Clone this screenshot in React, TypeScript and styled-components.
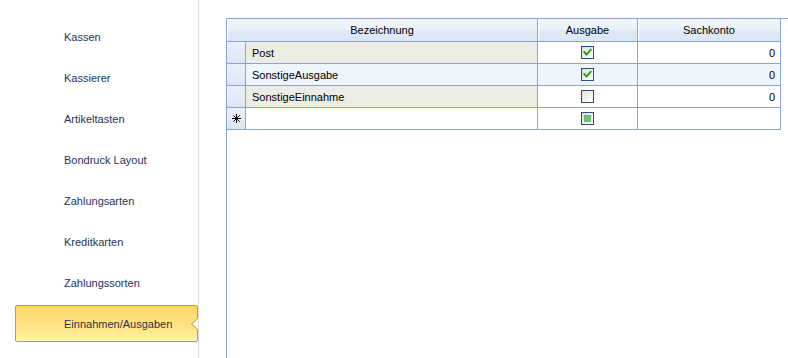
import React from "react";
import styled, { createGlobalStyle, css } from "styled-components";

const GRID_LINE = "#8aa2e2";

const GlobalStyle = createGlobalStyle`
  html, body { margin: 0; padding: 0; background: #fff; }
  body { font-family: "Liberation Sans", Arial, sans-serif; font-size: 11px; color: #000; }
  #root { width: 788px; height: 358px; overflow: hidden; }
`;

const Page = styled.div`
  display: flex;
  width: 788px;
  height: 358px;
  background: #fff;
  overflow: hidden;
`;

const Sidebar = styled.nav`
  flex: none;
  width: 199px;
  height: 100%;
  box-sizing: border-box;
  border-right: 1px solid #dddddd;
`;

const NavList = styled.ul`
  list-style: none;
  margin: 0;
  padding: 18px 0 0 15px;
  height: 100%;
  box-sizing: border-box;
  display: flex;
  flex-direction: column;
  gap: 4px;
  overflow: hidden;
`;

const NavItem = styled.li<{ $active?: boolean }>`
  position: relative;
  height: 37px;
  box-sizing: border-box;
  display: flex;
  align-items: center;
  padding-left: 48px;
  color: #1f3353;
  border: 1px solid transparent;
  ${(p) =>
    p.$active &&
    css`
      background: linear-gradient(#ffd768 0%, #ffe07c 45%, #ffeb90 80%, #fff3ac 92%, #fff8c8 100%);
      border-color: #c8993a;
      border-radius: 2px;
      &::after {
        content: "";
        position: absolute;
        top: 50%;
        right: -5px;
        width: 9px;
        height: 9px;
        box-sizing: border-box;
        background: #fff;
        border-left: 1px solid #c8993a;
        border-bottom: 1px solid #c8993a;
        transform: translateY(-50%) rotate(45deg);
      }
    `}
`;

const GridPanel = styled.section`
  flex: 1;
  margin: 18px 0 0 27px;
  height: 340px;
  box-sizing: border-box;
  border-left: 1px solid ${GRID_LINE};
  border-top: 1px solid ${GRID_LINE};
  display: flex;
  flex-direction: column;
  overflow: hidden;
`;

const HeaderRow = styled.div`
  display: grid;
  grid-template-columns: 311px 100px 143px 1fr;
  height: 23px;
  flex: none;
`;

const HeaderCell = styled.div`
  box-sizing: border-box;
  border-right: 1px solid ${GRID_LINE};
  border-bottom: 1px solid ${GRID_LINE};
  background: linear-gradient(#f3f7fc 0%, #eaf1fa 45%, #dfe9f6 55%, #dbe6f4 100%);
  box-shadow: inset 1px 0 #ffffff;
  display: flex;
  align-items: center;
  justify-content: center;
  white-space: nowrap;
`;

const HeaderFiller = styled.div`
  background: #fff;
`;

const DataRow = styled.div`
  display: grid;
  grid-template-columns: 19px 292px 100px 143px;
  height: 22px;
  flex: none;
`;

const Cell = styled.div<{ $bg?: string }>`
  box-sizing: border-box;
  border-right: 1px solid ${GRID_LINE};
  border-bottom: 1px solid ${GRID_LINE};
  background: ${(p) => p.$bg ?? "#fff"};
  display: flex;
  align-items: center;
  white-space: nowrap;
  overflow: hidden;
`;

const RowHeader = styled(Cell)`
  background: linear-gradient(#ebf1fa, #dce6f3);
  justify-content: center;
`;

const TextCell = styled(Cell)`
  padding-left: 6px;
`;

const CheckCell = styled(Cell)`
  justify-content: center;
`;

const NumberCell = styled(Cell)`
  justify-content: flex-end;
  padding-right: 5px;
`;

const CheckBox = styled.span`
  width: 13px;
  height: 13px;
  box-sizing: border-box;
  border: 1px solid #1d5286;
  background: linear-gradient(135deg, #dcdcd5 0%, #ededea 45%, #fbfbfa 80%, #ffffff 100%);
  display: inline-flex;
  align-items: center;
  justify-content: center;
`;

const Indeterminate = styled.span`
  width: 7px;
  height: 7px;
  background: #72c279;
  box-shadow: inset 0 0 0 1px #66b86d;
`;

const Check = () => (
  <svg width="11" height="11" viewBox="0 0 11 11" aria-hidden>
    <polyline
      points="2.3,5 4.5,7.6 8.7,2.8"
      fill="none"
      stroke="#21a121"
      strokeWidth="1.9"
      strokeLinecap="square"
    />
  </svg>
);

const NewRowIcon = () => (
  <svg width="9" height="9" viewBox="0 0 9 9" aria-hidden>
    <g stroke="#000" strokeWidth="1">
      <line x1="4.5" y1="0" x2="4.5" y2="9" />
      <line x1="0" y1="4.5" x2="9" y2="4.5" />
      <line x1="1.3" y1="1.3" x2="7.7" y2="7.7" />
      <line x1="7.7" y1="1.3" x2="1.3" y2="7.7" />
    </g>
  </svg>
);

const navItems = [
  "Kassen",
  "Kassierer",
  "Artikeltasten",
  "Bondruck Layout",
  "Zahlungsarten",
  "Kreditkarten",
  "Zahlungssorten",
  "Einnahmen/Ausgaben",
];

const rows = [
  { name: "Post", ausgabe: true, konto: "0" },
  { name: "SonstigeAusgabe", ausgabe: true, konto: "0" },
  { name: "SonstigeEinnahme", ausgabe: false, konto: "0" },
];

const READONLY_BG = "#ecebe4";
const ALT_BG = "#eef5fd";

export default function App() {
  return (
    <>
      <GlobalStyle />
      <Page>
        <Sidebar>
          <NavList>
            {navItems.map((item) => (
              <NavItem key={item} $active={item === "Einnahmen/Ausgaben"}>
                {item}
              </NavItem>
            ))}
          </NavList>
        </Sidebar>
        <GridPanel>
          <HeaderRow>
            <HeaderCell>Bezeichnung</HeaderCell>
            <HeaderCell>Ausgabe</HeaderCell>
            <HeaderCell>Sachkonto</HeaderCell>
            <HeaderFiller />
          </HeaderRow>
          {rows.map((r, i) => {
            const alt = i % 2 === 1;
            return (
              <DataRow key={r.name}>
                <RowHeader />
                <TextCell $bg={alt ? ALT_BG : READONLY_BG}>{r.name}</TextCell>
                <CheckCell $bg={alt ? ALT_BG : "#fff"}>
                  <CheckBox>{r.ausgabe && <Check />}</CheckBox>
                </CheckCell>
                <NumberCell $bg={alt ? ALT_BG : "#fff"}>{r.konto}</NumberCell>
              </DataRow>
            );
          })}
          <DataRow>
            <RowHeader>
              <NewRowIcon />
            </RowHeader>
            <TextCell />
            <CheckCell>
              <CheckBox>
                <Indeterminate />
              </CheckBox>
            </CheckCell>
            <NumberCell />
          </DataRow>
        </GridPanel>
      </Page>
    </>
  );
}
